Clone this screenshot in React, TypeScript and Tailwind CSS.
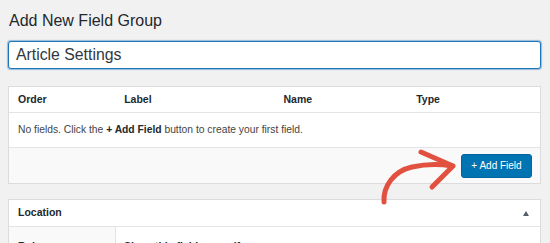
const font = { fontFamily: '"Liberation Sans", Arial, sans-serif' };

const columns = [
  { label: "Order", width: "w-[20%]" },
  { label: "Label", width: "w-[30%]" },
  { label: "Name", width: "w-[25%]" },
  { label: "Type", width: "w-[25%]" },
];

function CurvedArrow() {
  return (
    <svg
      className="absolute left-0 top-0 pointer-events-none"
      width="550"
      height="243"
      viewBox="0 0 550 243"
      fill="none"
    >
      <path
        d="M384 202 C 383 186 394 171 412 167 C 426 164 440 164 452 166"
        stroke="#e2513f"
        strokeWidth="5"
        strokeLinecap="round"
      />
      <path
        d="M421 152 L 453 166 L 432 187"
        stroke="#e2513f"
        strokeWidth="5"
        strokeLinecap="round"
        strokeLinejoin="round"
      />
    </svg>
  );
}

export default function App() {
  return (
    <div className="relative w-[550px] h-[243px] overflow-hidden bg-[#f1f1f1] text-[#23282d]" style={font}>
      <div className="pl-[8px] pr-[9px] pt-[11px]">
        <h1 className="text-[16px] leading-[20px] pl-[1px]">Add New Field Group</h1>

        {/* title input */}
        <div className="mt-[10px] h-[28px] flex items-center px-[7px] bg-white border border-[#1d75b8] rounded-[3px] shadow-[0_0_1px_1px_rgba(30,120,190,0.45)]">
          <span className="text-[15.8px] text-[#32373c]">Article Settings</span>
        </div>

        {/* fields box */}
        <div className="mt-[17px] bg-white border border-[#dcdcde]">
          <div className="flex h-[26px] items-center border-b border-[#e2e4e7]">
            {columns.map((c) => (
              <div key={c.label} className={`${c.width} pl-[9px] text-[10.5px] font-bold text-[#23282d]`}>
                {c.label}
              </div>
            ))}
          </div>
          <div className="h-[35px] flex items-center pl-[9px] text-[10.3px] text-[#444] border-b border-[#e2e4e7]">
            No fields. Click the&nbsp;<b className="text-[#23282d]">+ Add Field</b>&nbsp;button to create your first field.
          </div>
          <div className="h-[35px] bg-[#f9f9f9] flex items-center justify-end pr-[8px]">
            <button className="h-[24px] w-[71px] rounded-[3px] bg-[#0073b3] border border-[#00659d] text-white text-[10px] leading-none">
              + Add Field
            </button>
          </div>
        </div>

        {/* location box */}
        <div className="mt-[15px] bg-white border border-[#dcdcde]">
          <div className="h-[27px] flex items-center justify-between pl-[9px] pr-[11px] border-b border-[#e2e4e7]">
            <span className="text-[10.5px] font-bold">Location</span>
            <span className="w-0 h-0 border-l-[3.5px] border-r-[3.5px] border-b-[5px] border-l-transparent border-r-transparent border-b-[#555d66]" />
          </div>
          <div className="flex h-[40px]">
            <div className="w-[107px] bg-[#f9f9f9] border-r border-[#e2e4e7] pl-[9px] pt-[12px] text-[10.5px] font-bold">
              Rules
            </div>
            <div className="flex-1 pl-[8px] pt-[12px] text-[10.5px] font-bold">Show this field group if</div>
          </div>
        </div>
      </div>
      <CurvedArrow />
    </div>
  );
}
